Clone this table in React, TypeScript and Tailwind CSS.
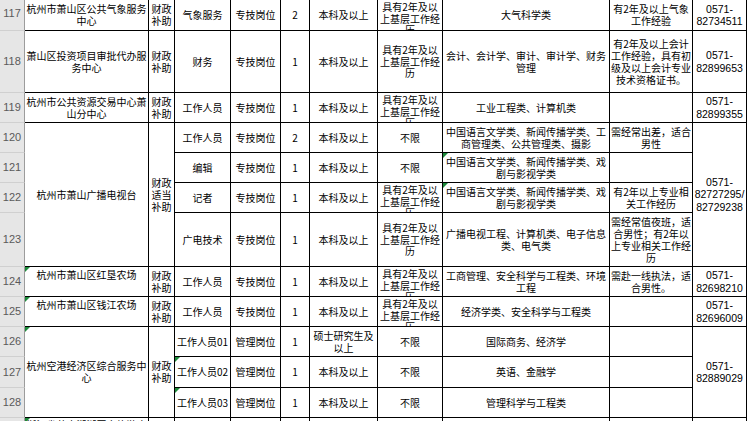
import type { ReactNode } from "react";

type CellProps = {
  lines?: string[];
  className?: string;
  tri?: boolean;
  top?: boolean;
  phone?: boolean;
  tight?: boolean;
};

function Cell({ lines = [], className = "", tri, top, phone, tight }: CellProps) {
  const align = top ? "justify-start" : "justify-center";
  const font = phone
    ? "font-['Liberation_Sans',sans-serif] text-[10.5px] leading-[12.5px]"
    : tight
      ? "leading-[11.5px]"
      : "leading-[12px]";
  return (
    <div
      className={`relative flex flex-col items-center ${align} overflow-hidden border-r border-b border-black bg-white text-center ${font} ${className}`}
    >
      {tri && (
        <span className="absolute left-0 top-0 h-0 w-0 border-t-[5px] border-r-[5px] border-t-[#1d8a3a] border-r-transparent" />
      )}
      {lines.map((l, i) => (
        <div key={i} className="shrink-0 whitespace-nowrap">
          {l}
        </div>
      ))}
    </div>
  );
}

function Head({ n }: { n: number }) {
  return (
    <div className="flex items-center justify-center border-r border-b border-r-[#9c9c9c] border-b-[#d0d0d0] bg-[#e6e6e6] font-['Liberation_Sans',sans-serif] text-[11px] text-[#5a5a5a]">
      {n}
    </div>
  );
}

function Pad() {
  return <div className="bg-white" />;
}

const FUND = ["财政", "补助"];
const EXP = ["具有2年及以", "上基层工作经", "历"];
const TECH = ["专技岗位"];
const MGMT = ["管理岗位"];
const BK = ["本科及以上"];

function Row({ children }: { children: ReactNode }) {
  return <>{children}</>;
}

export default function App() {
  return (
    <div className="h-[421px] w-[750px] overflow-hidden bg-white">
      <div className="-mt-[3px] grid grid-cols-[25px_124px_26px_56px_50px_29px_68px_65px_167px_83px_54px_1fr] grid-rows-[34px_62px_30px_30px_30px_30px_54px_30px_30px_30px_31px_30px_30px] font-['Noto_Sans_CJK_SC',sans-serif] text-[10px] text-black">
        {/* 117 */}
        <Row>
          <Head n={117} />
          <Cell lines={["杭州市萧山区公共气象服务", "中心"]} className="pt-[3px]" />
          <Cell lines={FUND} className="pt-[3px]" />
          <Cell lines={["气象服务"]} className="pt-[3px]" />
          <Cell lines={TECH} className="pt-[3px]" />
          <Cell lines={["2"]} className="pt-[3px]" />
          <Cell lines={BK} className="pt-[3px]" />
          <Cell lines={EXP} top tight className="pt-[4px]" />
          <Cell lines={["大气科学类"]} className="pt-[3px]" />
          <Cell lines={["有2年及以上气象", "工作经验"]} className="pt-[3px]" />
          <Cell lines={["0571-", "82734511"]} phone className="pt-[3px]" />
          <Pad />
        </Row>

        {/* 118 */}
        <Row>
          <Head n={118} />
          <Cell lines={["萧山区投资项目审批代办服", "务中心"]} />
          <Cell lines={FUND} />
          <Cell lines={["财务"]} />
          <Cell lines={TECH} />
          <Cell lines={["1"]} />
          <Cell lines={BK} />
          <Cell lines={EXP} tight />
          <Cell lines={["会计、会计学、审计、审计学、财务", "管理"]} />
          <Cell lines={["有2年及以上会计", "工作经验，具有初", "级及以上会计专业", "技术资格证书。"]} />
          <Cell lines={["0571-", "82899653"]} phone />
          <Pad />
        </Row>

        {/* 119 */}
        <Row>
          <Head n={119} />
          <Cell lines={["杭州市公共资源交易中心萧", "山分中心"]} />
          <Cell lines={FUND} />
          <Cell lines={["工作人员"]} />
          <Cell lines={TECH} />
          <Cell lines={["1"]} />
          <Cell lines={BK} />
          <Cell lines={EXP} top tight className="pt-[1px]" />
          <Cell lines={["工业工程类、计算机类"]} />
          <Cell />
          <Cell lines={["0571-", "82899355"]} phone />
          <Pad />
        </Row>

        {/* 120 */}
        <Row>
          <Head n={120} />
          <Cell lines={["杭州市萧山广播电视台"]} className="row-span-4" />
          <Cell lines={["财政", "适当", "补助"]} className="row-span-4" />
          <Cell lines={["工作人员"]} />
          <Cell lines={TECH} />
          <Cell lines={["2"]} />
          <Cell lines={BK} />
          <Cell lines={["不限"]} />
          <Cell lines={["中国语言文学类、新闻传播学类、工", "商管理类、公共管理类、摄影"]} />
          <Cell lines={["需经常出差，适合", "男性"]} />
          <Cell lines={["0571-", "82727295/", "82729238"]} phone className="row-span-4" />
          <Pad />
        </Row>

        {/* 121 */}
        <Row>
          <Head n={121} />
          <Cell lines={["编辑"]} />
          <Cell lines={TECH} />
          <Cell lines={["1"]} />
          <Cell lines={BK} />
          <Cell lines={["不限"]} />
          <Cell lines={["中国语言文学类、新闻传播学类、戏", "剧与影视学类"]} tri />
          <Cell />
          <Pad />
        </Row>

        {/* 122 */}
        <Row>
          <Head n={122} />
          <Cell lines={["记者"]} />
          <Cell lines={TECH} />
          <Cell lines={["1"]} />
          <Cell lines={BK} />
          <Cell lines={EXP} top tight className="pt-[1px]" />
          <Cell lines={["中国语言文学类、新闻传播学类、戏", "剧与影视学类"]} tri />
          <Cell lines={["有2年以上专业相", "关工作经历"]} />
          <Pad />
        </Row>

        {/* 123 */}
        <Row>
          <Head n={123} />
          <Cell lines={["广电技术"]} />
          <Cell lines={TECH} />
          <Cell lines={["1"]} />
          <Cell lines={BK} />
          <Cell lines={EXP} tight />
          <Cell lines={["广播电视工程、计算机类、电子信息", "类、电气类"]} />
          <Cell lines={["需经常值夜班，适", "合男性；有2年以", "上专业相关工作经", "历"]} />
          <Pad />
        </Row>

        {/* 124 */}
        <Row>
          <Head n={124} />
          <Cell lines={["杭州市萧山区红垦农场"]} top tri className="pt-[2px]" />
          <Cell lines={FUND} />
          <Cell lines={["工作人员"]} />
          <Cell lines={TECH} />
          <Cell lines={["1"]} />
          <Cell lines={BK} />
          <Cell lines={EXP} top tight className="pt-[1px]" />
          <Cell lines={["工商管理、安全科学与工程类、环境", "工程"]} />
          <Cell lines={["需赴一线执法，适", "合男性。"]} />
          <Cell lines={["0571-", "82698210"]} phone />
          <Pad />
        </Row>

        {/* 125 */}
        <Row>
          <Head n={125} />
          <Cell lines={["杭州市萧山区钱江农场"]} top tri className="pt-[2px]" />
          <Cell lines={FUND} />
          <Cell lines={["工作人员"]} />
          <Cell lines={TECH} />
          <Cell lines={["1"]} />
          <Cell lines={BK} />
          <Cell lines={EXP} top tight className="pt-[1px]" />
          <Cell lines={["经济学类、安全科学与工程类"]} />
          <Cell />
          <Cell lines={["0571-", "82696009"]} phone />
          <Pad />
        </Row>

        {/* 126 */}
        <Row>
          <Head n={126} />
          <Cell lines={["杭州空港经济区综合服务中", "心"]} tri className="row-span-3" />
          <Cell lines={FUND} className="row-span-3" />
          <Cell lines={["工作人员01"]} />
          <Cell lines={MGMT} />
          <Cell lines={["1"]} />
          <Cell lines={["硕士研究生及", "以上"]} />
          <Cell lines={["不限"]} />
          <Cell lines={["国际商务、经济学"]} />
          <Cell />
          <Cell lines={["0571-", "82889029"]} phone className="row-span-3" />
          <Pad />
        </Row>

        {/* 127 */}
        <Row>
          <Head n={127} />
          <Cell lines={["工作人员02"]} tri />
          <Cell lines={MGMT} />
          <Cell lines={["1"]} />
          <Cell lines={BK} />
          <Cell lines={["不限"]} />
          <Cell lines={["英语、金融学"]} />
          <Cell />
          <Pad />
        </Row>

        {/* 128 */}
        <Row>
          <Head n={128} />
          <Cell lines={["工作人员03"]} tri />
          <Cell lines={MGMT} />
          <Cell lines={["1"]} />
          <Cell lines={BK} />
          <Cell lines={["不限"]} />
          <Cell lines={["管理科学与工程类"]} />
          <Cell />
          <Pad />
        </Row>

        {/* 129 */}
        <Row>
          <Head n={129} />
          <Cell lines={["浙江省萧山湘湖国家旅游度", "假区管理委员会"]} top tri className="pt-[1px]" />
          <Cell />
          <Cell />
          <Cell />
          <Cell />
          <Cell />
          <Cell />
          <Cell />
          <Cell />
          <Cell />
          <Pad />
        </Row>
      </div>
    </div>
  );
}
